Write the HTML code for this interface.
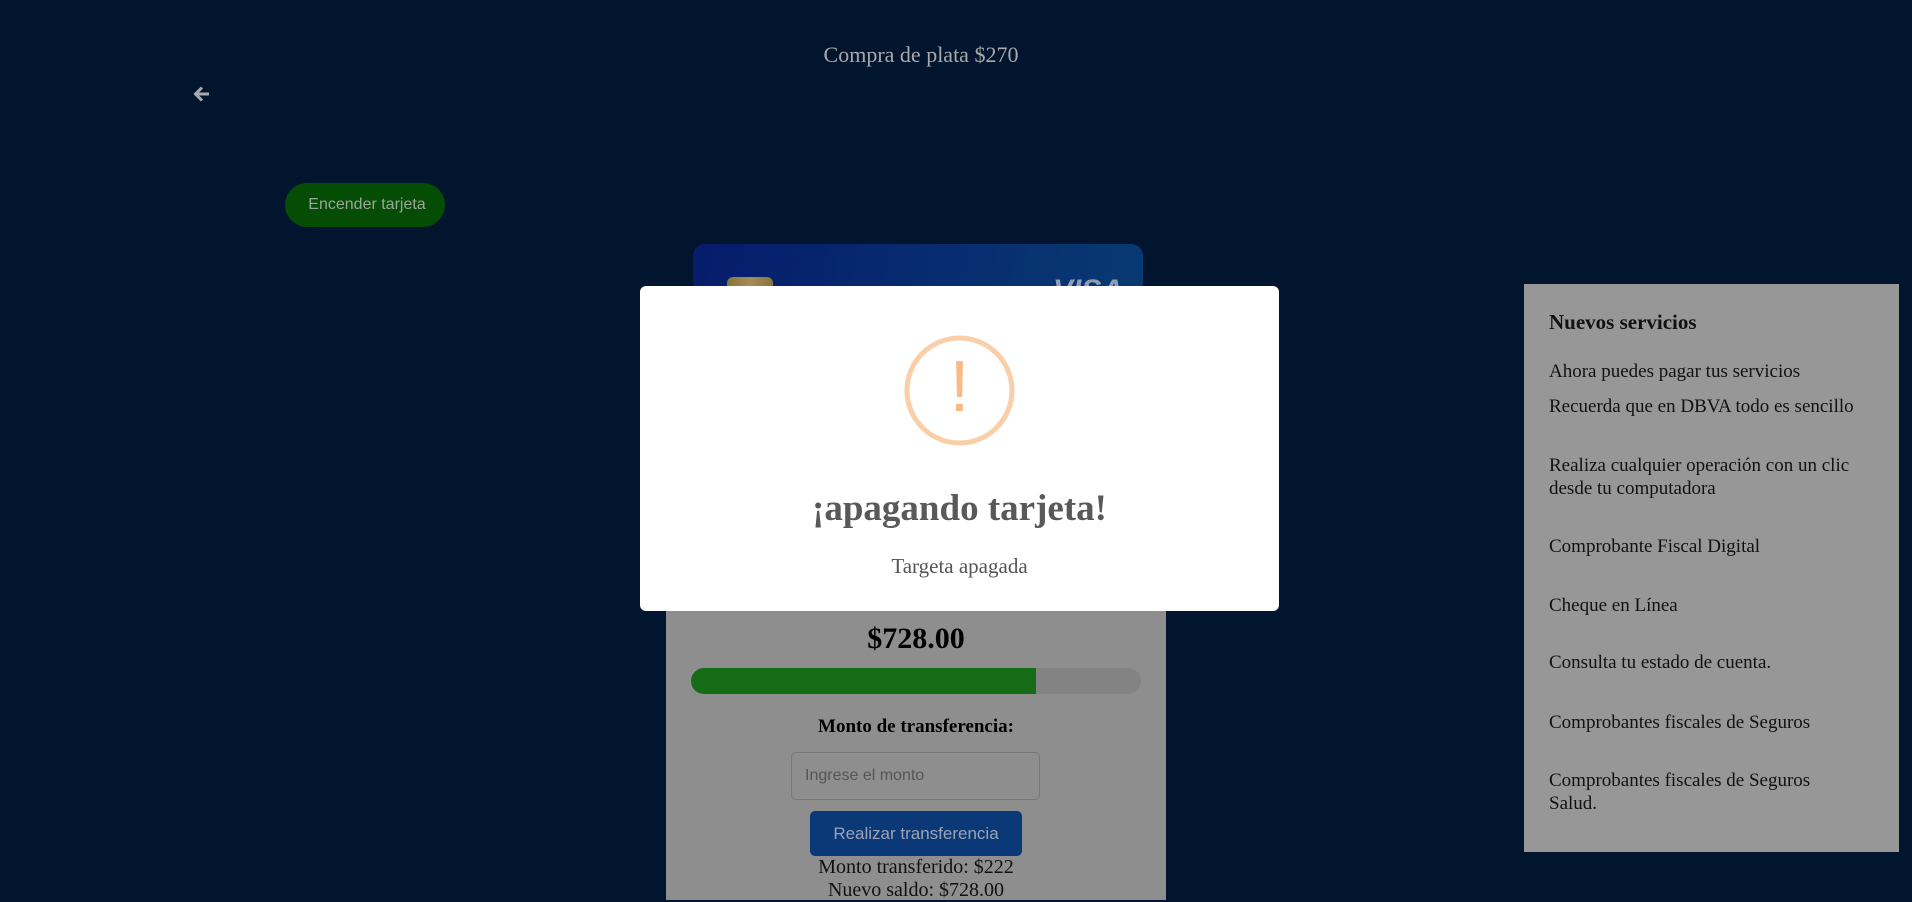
<!DOCTYPE html>
<html><head><meta charset="utf-8"><style>
*{margin:0;padding:0;box-sizing:border-box}
body{width:1912px;height:897px;background:#02152e;position:relative;overflow:hidden;font-family:"Liberation Serif",serif}
.a{position:absolute}
.title{left:0;width:1842px;top:42px;text-align:center;color:#a9a9a9;font-size:22px}
.btn1{left:285px;top:183px;width:160px;height:44px;border-radius:22px;background:#054d05;color:#9aa59a;font-family:"Liberation Sans",sans-serif;font-size:16px;line-height:44px;text-align:center;padding-left:4px}
.card{left:693px;top:244px;width:450px;height:120px;border-radius:12px;background:linear-gradient(100deg,#061c6c,#083a72)}
.chip{left:34px;top:33px;width:46px;height:40px;border-radius:6px;background:linear-gradient(90deg,#85733f,#a38f55 50%,#85733f)}
.visa{right:20px;top:30px;color:#8f9cb5;font:italic bold 30px "Liberation Sans",sans-serif}
.panel{left:666px;top:600px;width:500px;height:300px;background:#8e8e8e;text-align:center}
.modal{left:640px;top:286px;width:639px;height:325px;background:#fff;border-radius:6px;text-align:center}
.right{left:1524px;top:284px;width:375px;height:568px;background:#979797;color:#111;font-size:19px;padding-left:25px}
.right div{position:absolute;left:25px;line-height:23px}
</style></head><body>
<div class="a title">Compra de plata $270</div>
<svg class="a" style="left:192px;top:84px" width="20" height="20" viewBox="0 0 20 20"><path d="M17 10H4M10 3.5L3.5 10 10 16.5" stroke="#a9a9a9" stroke-width="3" fill="none"/></svg>
<div class="a btn1">Encender tarjeta</div>
<div class="a card"><div class="a chip"></div><div class="a visa">VISA</div></div>
<div class="a panel">
<div class="a" style="left:0;width:500px;top:22px;font-weight:bold;font-size:30px;color:#000">$728.00</div>
<div class="a" style="left:25px;top:68px;width:450px;height:26px;border-radius:13px;background:#838383;overflow:hidden"><div style="width:345px;height:26px;background:#166c16"></div></div>
<div class="a" style="left:0;width:500px;top:116px;font-weight:bold;font-size:19px;color:#000">Monto de transferencia:</div>
<div class="a" style="left:125px;top:152px;width:249px;height:48px;border:1px solid #777;border-radius:5px;font-family:'Liberation Sans',sans-serif;font-size:16px;color:#555;text-align:left;padding-left:13px;line-height:46px">Ingrese el monto</div>
<div class="a" style="left:144px;top:211px;width:212px;height:45px;border-radius:5px;background:#0b3877;font-family:'Liberation Sans',sans-serif;font-size:17px;color:#9aa3b5;line-height:45px">Realizar transferencia</div>
<div class="a" style="left:0;width:500px;top:256px;font-size:20px;color:#111;line-height:23px">Monto transferido: $222<br>Nuevo saldo: $728.00</div>
</div>
<div class="a modal">
<svg class="a" style="left:264px;top:49px" width="111" height="111" viewBox="0 0 111 111"><circle cx="55.5" cy="55.5" r="52.5" fill="none" stroke="#facea8" stroke-width="5"/></svg>
<div class="a" style="left:0;width:639px;top:56px;font-size:72px;line-height:90px;color:#f8bb86;font-family:'Liberation Sans',sans-serif">!</div>
<div class="a" style="left:0;width:639px;top:201px;font-size:37px;font-weight:bold;color:#595959">¡apagando tarjeta!</div>
<div class="a" style="left:0;width:639px;top:268px;font-size:21px;color:#545454">Targeta apagada</div>
</div>
<div class="a right">
<div style="top:27px;font-weight:bold;font-size:21px">Nuevos servicios</div>
<div style="top:76px">Ahora puedes pagar tus servicios</div>
<div style="top:111px">Recuerda que en DBVA todo es sencillo</div>
<div style="top:170px">Realiza cualquier operación con un clic<br>desde tu computadora</div>
<div style="top:251px">Comprobante Fiscal Digital</div>
<div style="top:310px">Cheque en Línea</div>
<div style="top:367px">Consulta tu estado de cuenta.</div>
<div style="top:427px">Comprobantes fiscales de Seguros</div>
<div style="top:485px">Comprobantes fiscales de Seguros<br>Salud.</div>
</div>
</body></html>
